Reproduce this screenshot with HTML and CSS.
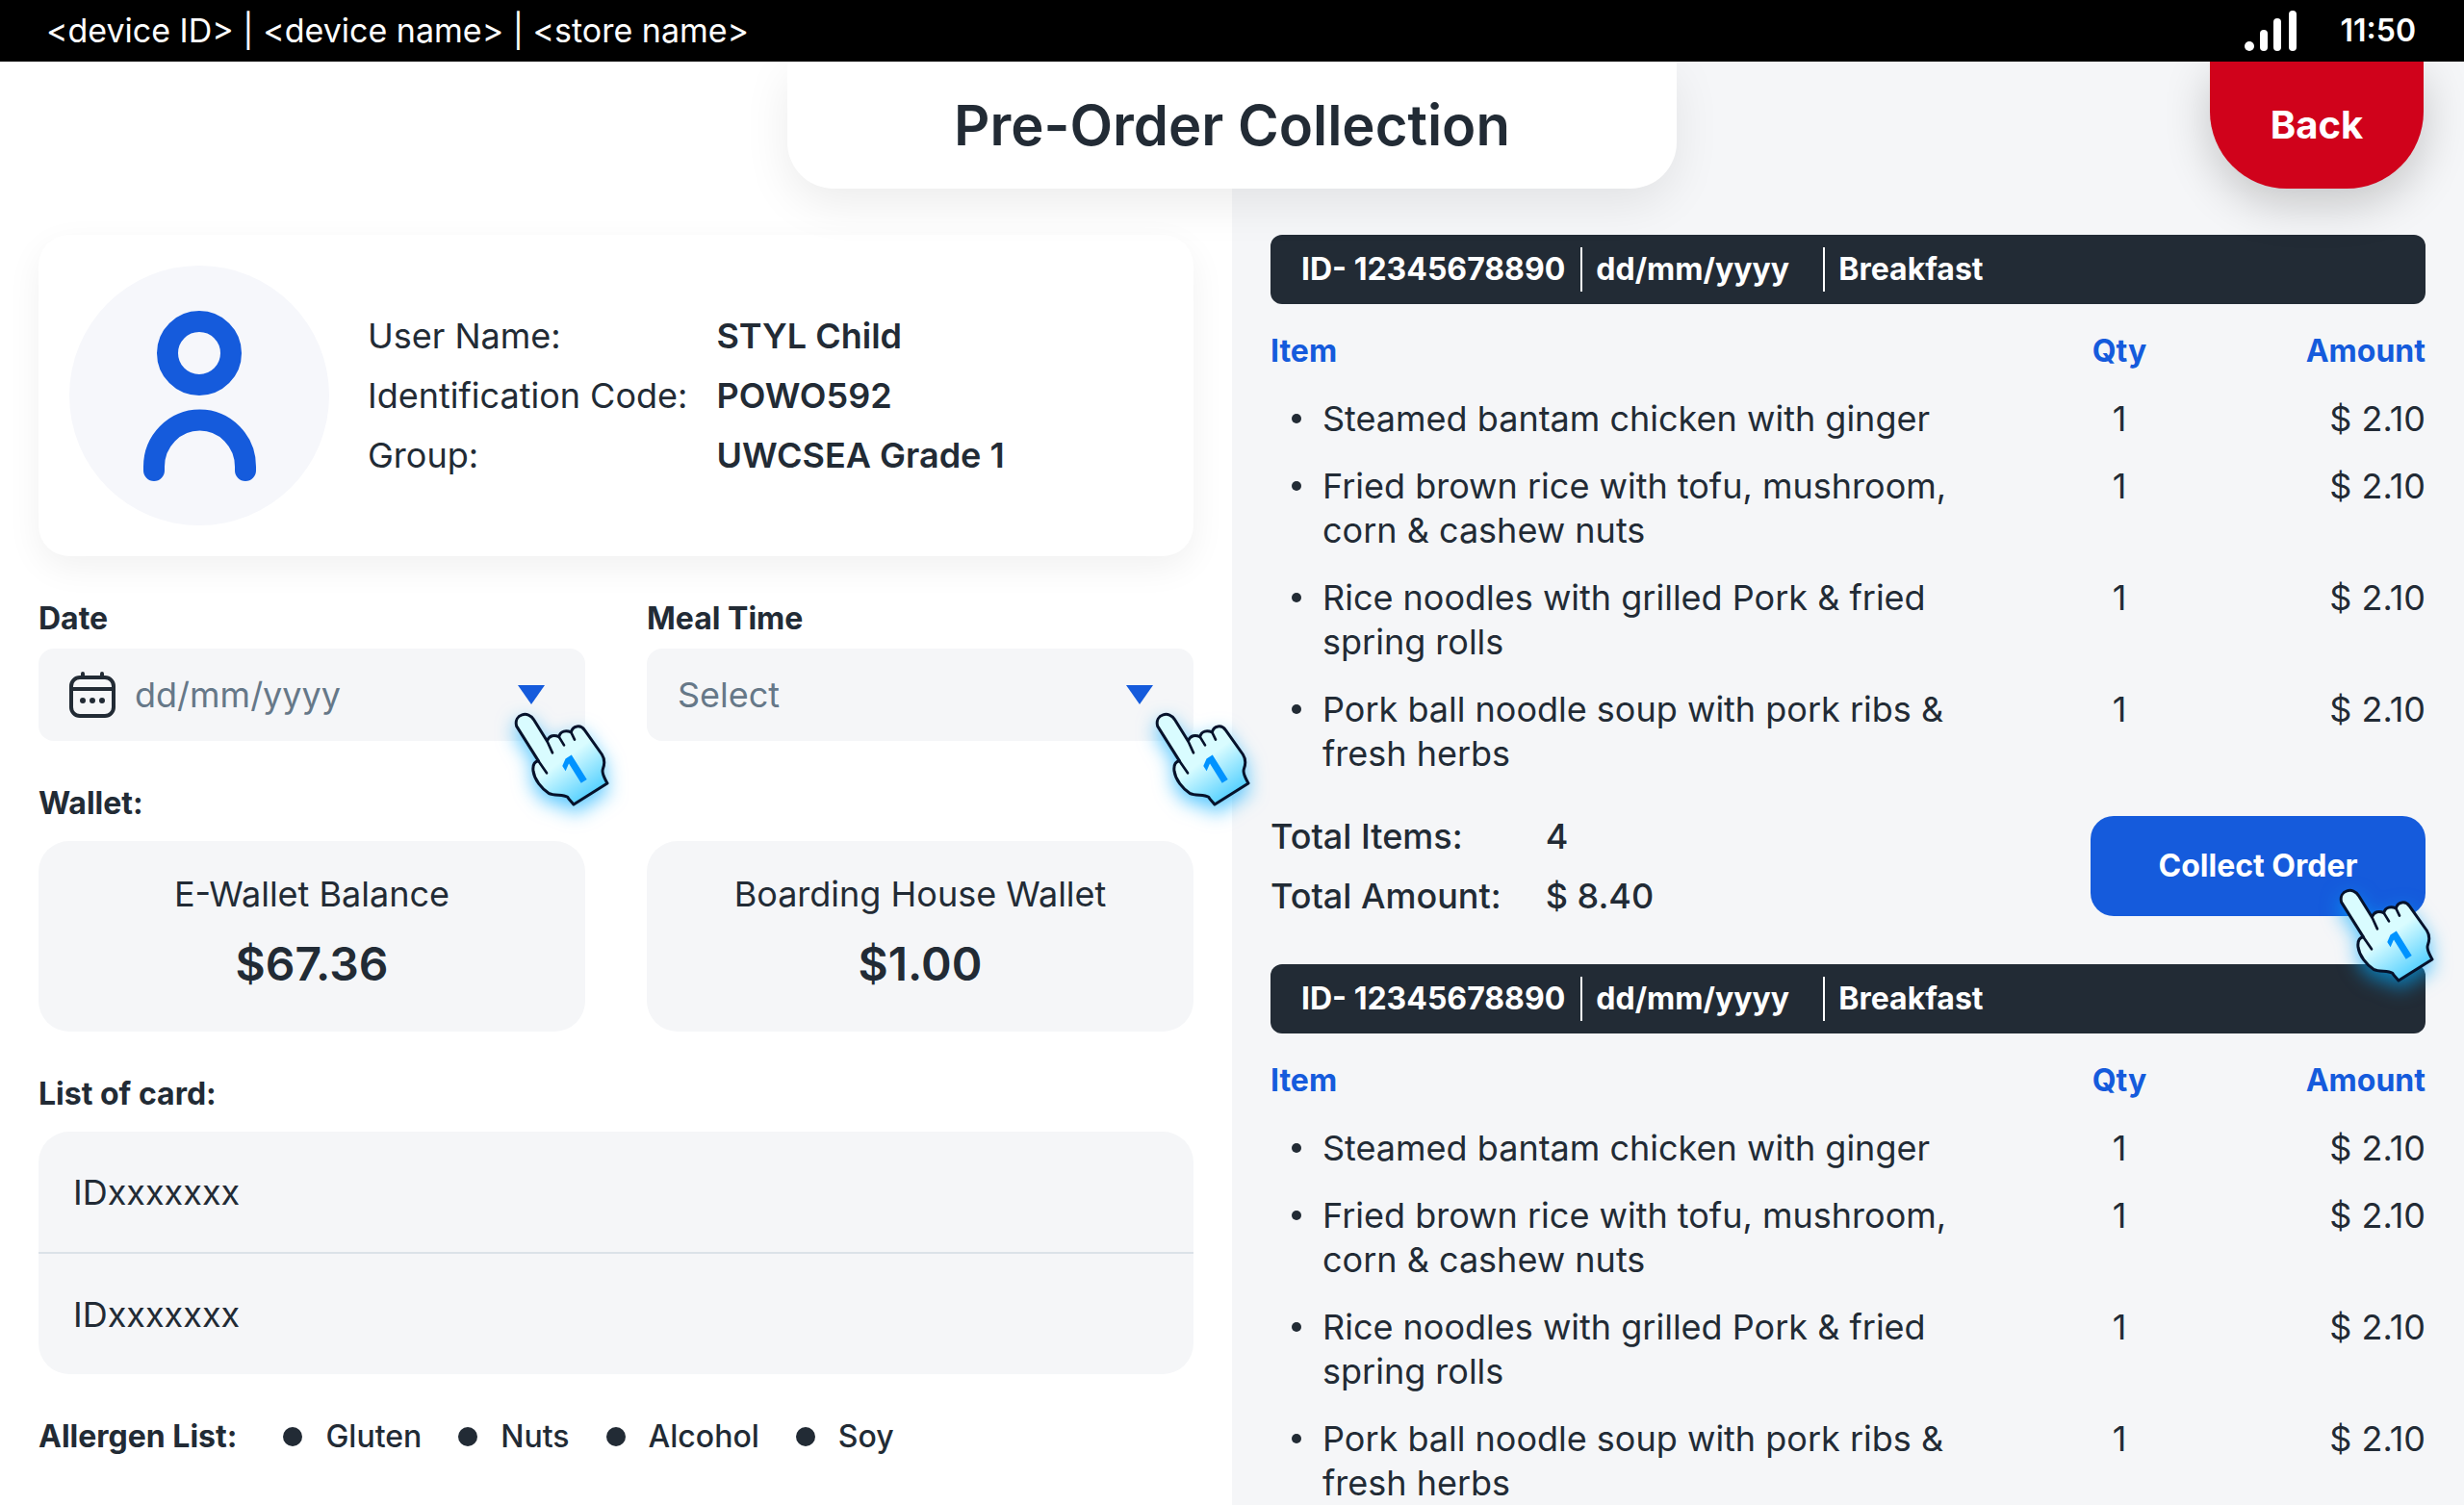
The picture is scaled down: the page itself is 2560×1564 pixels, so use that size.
FILE: index.html
```html
<!DOCTYPE html>
<html lang="en">
<head>
<meta charset="utf-8">
<meta name="viewport" content="width=device-width, initial-scale=1">
<title>Pre-Order Collection</title>
<link rel="stylesheet" href="styles.css">
</head>
<body>
<svg class="sprite" aria-hidden="true">
  <defs>
    <linearGradient id="hand-fill" x1="0.3" y1="0.2" x2="0.85" y2="0.95">
      <stop offset="0.4" stop-color="#d9fcff"/>
      <stop offset="1" stop-color="#45cbff"/>
    </linearGradient>
    <symbol id="hand" viewBox="0 0 420 450">
      <path d="M50 104 C40 66 88 54 104 84 L145 150 C152 132 168 130 182 137 C187 118 205 116 220 123 C225 102 250 98 262 116 L316 192 C325 206 325 222 319 238 C314 252 326 268 333 282 L228 348 C222 340 214 334 209 325 C194 316 168 322 150 313 C128 298 106 272 102 244 C100 226 106 214 118 212 Z" fill="url(#hand-fill)" stroke="#06122b" stroke-width="9" stroke-linejoin="round"/>
      <path d="M145 150 L162 187 M182 137 L198 163 M220 123 L231 146 M118 212 L144 250" fill="none" stroke="#06122b" stroke-width="8" stroke-linecap="round"/>
      <text class="hand-digit" x="228" y="288" text-anchor="middle" transform="rotate(-32 228 243)">1</text>
    </symbol>
  </defs>
</svg>
<div class="app">
  <div class="status-bar">
    <span>&lt;device ID&gt; | &lt;device name&gt; | &lt;store name&gt;</span>
    <div class="status-right">
      <svg class="signal" viewBox="0 0 54 42" aria-hidden="true" fill="#fff">
        <circle cx="5" cy="37" r="5"/>
        <rect x="16" y="20" width="8" height="22" rx="4"/>
        <rect x="30" y="8" width="8" height="34" rx="4"/>
        <rect x="46" y="0" width="8" height="42" rx="4"/>
      </svg>
      <time>11:50</time>
    </div>
  </div>

  <header class="page-header">
    <h1 class="title">Pre-Order Collection</h1>
    <button class="back" type="button">Back</button>
  </header>

  <main class="columns">
    <div class="customer">
      <section class="profile">
        <svg class="avatar" viewBox="0 0 270 270" aria-hidden="true">
          <circle cx="135" cy="135" r="135" fill="#f6f7fb"/>
          <circle cx="135" cy="91" r="33" fill="none" stroke="#155bdc" stroke-width="22"/>
          <path d="M88 213 V209 A47 48 0 0 1 183 209 V213" fill="none" stroke="#155bdc" stroke-width="22" stroke-linecap="round"/>
        </svg>
        <dl class="details">
          <dt>User Name:</dt><dd>STYL Child</dd>
          <dt>Identification Code:</dt><dd>POWO592</dd>
          <dt>Group:</dt><dd>UWCSEA Grade 1</dd>
        </dl>
      </section>

      <form class="pair">
        <div class="field">
          <label class="label" for="date">Date</label>
          <div class="control">
            <svg class="calendar" viewBox="0 0 48 48" aria-hidden="true">
              <rect x="2" y="6" width="44" height="40" rx="9" fill="none" stroke="#222b35" stroke-width="4"/>
              <path d="M2 18 H46 M14 2 V5 M34 2 V5" fill="none" stroke="#222b35" stroke-width="4" stroke-linecap="round"/>
              <g fill="#222b35"><circle cx="14" cy="30" r="3"/><circle cx="24" cy="30" r="3"/><circle cx="34" cy="30" r="3"/></g>
            </svg>
            <input id="date" type="text" placeholder="dd/mm/yyyy">
            <svg class="caret" viewBox="0 0 28 20" aria-hidden="true"><path d="M0 0 H28 L14 20 Z" fill="#155bdc"/></svg>
            <svg class="hand hand-date" aria-hidden="true"><use href="#hand"/></svg>
          </div>
        </div>
        <div class="field">
          <label class="label" for="meal">Meal Time</label>
          <div class="control">
            <select id="meal"><option>Select</option></select>
            <svg class="caret" viewBox="0 0 28 20" aria-hidden="true"><path d="M0 0 H28 L14 20 Z" fill="#155bdc"/></svg>
            <svg class="hand hand-meal" aria-hidden="true"><use href="#hand"/></svg>
          </div>
        </div>
      </form>

      <section class="group">
        <h2 class="label">Wallet:</h2>
        <div class="pair">
          <div class="wallet"><span>E-Wallet Balance</span><strong>$67.36</strong></div>
          <div class="wallet"><span>Boarding House Wallet</span><strong>$1.00</strong></div>
        </div>
      </section>

      <section class="group">
        <h2 class="label">List of card:</h2>
        <ul class="cards">
          <li>IDxxxxxxx</li>
          <li>IDxxxxxxx</li>
        </ul>
      </section>

      <section class="allergens">
        <h2 class="label">Allergen List:</h2>
        <ul>
          <li>Gluten</li>
          <li>Nuts</li>
          <li>Alcohol</li>
          <li>Soy</li>
        </ul>
      </section>
    </div>

    <div class="orders">
      <article class="order">
        <h2 class="order-head"><span>ID- 12345678890</span><span class="order-date">dd/mm/yyyy</span><span>Breakfast</span></h2>
        <table>
          <thead><tr><th>Item</th><th>Qty</th><th>Amount</th></tr></thead>
          <tbody>
            <tr><td>Steamed bantam chicken with ginger</td><td>1</td><td>$ 2.10</td></tr>
            <tr><td>Fried brown rice with tofu, mushroom, corn &amp; cashew nuts</td><td>1</td><td>$ 2.10</td></tr>
            <tr><td>Rice noodles with grilled Pork &amp; fried spring rolls</td><td>1</td><td>$ 2.10</td></tr>
            <tr><td>Pork ball noodle soup with pork ribs &amp; fresh herbs</td><td>1</td><td>$ 2.10</td></tr>
          </tbody>
        </table>
        <div class="summary">
          <dl class="totals">
            <dt>Total Items:</dt><dd>4</dd>
            <dt>Total Amount:</dt><dd>$ 8.40</dd>
          </dl>
          <div class="collect-wrap">
            <button class="collect" type="button">Collect Order</button>
            <svg class="hand hand-collect" aria-hidden="true"><use href="#hand"/></svg>
          </div>
        </div>
      </article>

      <article class="order">
        <h2 class="order-head"><span>ID- 12345678890</span><span class="order-date">dd/mm/yyyy</span><span>Breakfast</span></h2>
        <table>
          <thead><tr><th>Item</th><th>Qty</th><th>Amount</th></tr></thead>
          <tbody>
            <tr><td>Steamed bantam chicken with ginger</td><td>1</td><td>$ 2.10</td></tr>
            <tr><td>Fried brown rice with tofu, mushroom, corn &amp; cashew nuts</td><td>1</td><td>$ 2.10</td></tr>
            <tr><td>Rice noodles with grilled Pork &amp; fried spring rolls</td><td>1</td><td>$ 2.10</td></tr>
            <tr><td>Pork ball noodle soup with pork ribs &amp; fresh herbs</td><td>1</td><td>$ 2.10</td></tr>
          </tbody>
        </table>
      </article>
    </div>
  </main>
</div>
</body>
</html>
```
FILE: styles.css
```css
:root {
  --ink: #222b35;
  --muted: #667888;
  --blue: #155bdc;
  --red: #d0021b;
  --panel: #f5f6f8;
}

* { box-sizing: border-box; }

body, h1, h2, dl, dd, ul { margin: 0; padding: 0; }
ul { list-style: none; }

body {
  font: 400 36px/46px Inter, "Open Sans", sans-serif;
  color: var(--ink);
}

button, input, select { font: inherit; border: 0; }

.sprite { display: block; width: 0; height: 0; }

.app {
  height: 100vh;
  overflow: hidden;
  background: linear-gradient(to right, #fff 50%, var(--panel) 50%);
}

/* Status bar */
.status-bar {
  display: flex;
  justify-content: space-between;
  align-items: center;
  height: 64px;
  padding: 0 50px 0 48px;
  background: #000;
  color: #fff;
  font-size: 34px;
}
.status-right { display: flex; align-items: center; gap: 46px; }
.status-right time { font-size: 32px; font-weight: 600; }
.signal { width: 54px; height: 42px; }

/* Page header */
.page-header {
  display: grid;
  grid-template-columns: 1fr 36% 1fr;
  height: 132px;
  padding-right: 42px;
  padding-left: 42px;
}
.page-header .title {
  grid-column: 2;
  display: flex;
  align-items: center;
  justify-content: center;
  margin: 0 -16px;
  background: #fff;
  border-radius: 0 0 48px 48px;
  clip-path: inset(0 -60px -60px -60px);
  box-shadow: 0 16px 48px rgba(0, 0, 0, 0.08);
  font-size: 58px;
  font-weight: 600;
}
.back {
  justify-self: end;
  width: 222px;
  background: var(--red);
  color: #fff;
  border-radius: 0 0 80px 80px;
  clip-path: inset(0 -80px -80px -80px);
  box-shadow: 0 16px 48px rgba(0, 0, 0, 0.2);
  font-size: 40px;
  font-weight: 700;
}

/* Two columns */
.columns {
  display: grid;
  grid-template-columns: 1fr 1fr;
  padding-top: 48px;
}
.customer {
  display: flex;
  flex-direction: column;
  gap: 44px;
  padding: 0 40px;
}
.orders {
  display: flex;
  flex-direction: column;
  gap: 48px;
  padding: 0 40px;
}

.profile {
  display: flex;
  align-items: center;
  gap: 40px;
  padding: 32px;
  background: #fff;
  border-radius: 32px;
  box-shadow: 0 12px 36px rgba(0, 0, 0, 0.06);
}
.avatar { width: 270px; height: 270px; }
.details {
  display: grid;
  grid-template-columns: auto auto;
  gap: 16px 30px;
}
.details dd { font-weight: 600; }

.label { font-size: 32px; line-height: 42px; font-weight: 700; }
.pair {
  display: grid;
  grid-template-columns: repeat(2, minmax(0, 1fr));
  gap: 64px;
}
.field { display: flex; flex-direction: column; gap: 10px; }
.control {
  position: relative;
  display: flex;
  align-items: center;
  height: 96px;
  padding: 0 42px 0 32px;
  background: var(--panel);
  border-radius: 16px;
}
.control input, .control select {
  flex: 1;
  min-width: 0;
  padding: 0;
  background: none;
  color: var(--muted);
  appearance: none;
}
.control input::placeholder { color: var(--muted); opacity: 1; }
.calendar { width: 48px; height: 48px; margin-right: 20px; }
.caret { width: 28px; height: 20px; }

.group { display: flex; flex-direction: column; gap: 18px; }
.wallet {
  display: flex;
  flex-direction: column;
  align-items: center;
  gap: 20px;
  padding: 32px 32px 40px;
  background: var(--panel);
  border-radius: 32px;
}
.wallet strong { font-size: 48px; line-height: 60px; font-weight: 600; }

.cards { background: var(--panel); border-radius: 32px; }
.cards li { padding: 40px 36px 39px; }
.cards li + li { border-top: 2px solid #dbe2e8; }

.allergens { display: flex; gap: 48px; }
.allergens ul {
  display: flex;
  gap: 38px;
  font-size: 32px;
  line-height: 42px;
  font-weight: 500;
}
.allergens li { display: flex; align-items: center; gap: 24px; }
.allergens li::before {
  content: "";
  width: 20px;
  height: 20px;
  border-radius: 50%;
  background: var(--ink);
}

/* Orders */
.order-head {
  display: flex;
  align-items: center;
  height: 72px;
  padding: 0 32px;
  background: var(--ink);
  border-radius: 12px;
  color: #fff;
  font-size: 32px;
  font-weight: 700;
}
.order-head span + span {
  margin-left: 16px;
  padding-left: 14px;
  border-left: 2px solid #fff;
}
.order-head .order-date { min-width: 236px; }

.order table {
  width: 100%;
  margin-top: 26px;
  border-collapse: collapse;
  table-layout: fixed;
}
.order th { padding: 0; font-size: 32px; font-weight: 700; color: var(--blue); }
.order td { padding: 24px 0 0; vertical-align: top; }
.order th:nth-child(1) { width: 62%; text-align: left; }
.order th:nth-child(2) { width: 23%; }
.order td:nth-child(1) { padding-left: 54px; padding-right: 24px; }
.order td:nth-child(1)::before {
  content: "";
  float: left;
  width: 10px;
  height: 10px;
  margin: 18px 0 0 -32px;
  border-radius: 50%;
  background: var(--ink);
}
.order td:nth-child(2) { text-align: center; }
.order th:nth-child(3), .order td:nth-child(3) { text-align: right; }

.summary {
  display: flex;
  justify-content: space-between;
  align-items: center;
  margin-top: 40px;
}
.totals {
  display: grid;
  grid-template-columns: auto auto;
  gap: 16px 46px;
  font-weight: 500;
}
.collect-wrap { position: relative; }
.collect {
  display: block;
  width: 348px;
  height: 104px;
  background: var(--blue);
  border-radius: 24px;
  color: #fff;
  font-size: 32px;
  font-weight: 700;
}

/* Tap markers over the controls */
.hand {
  position: absolute;
  z-index: 2;
  width: 140px;
  height: 150px;
  pointer-events: none;
  filter: drop-shadow(0 8px 10px rgba(0, 170, 255, 0.65));
}
.hand-digit { font: 800 124px Inter, sans-serif; fill: #0093ff; }
.hand-date { top: 46px; right: -52px; }
.hand-meal { top: 46px; right: -86px; }
.hand-collect { top: 55px; right: -36px; }
```
